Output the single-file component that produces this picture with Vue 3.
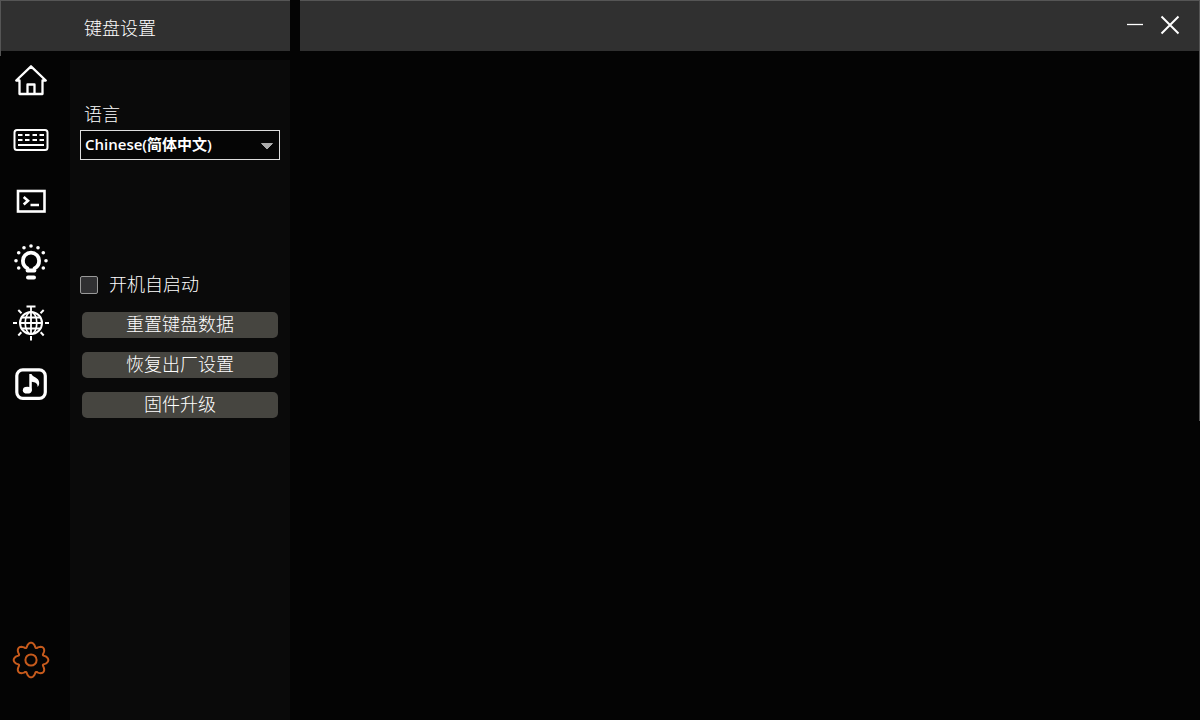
<script setup>
import { ref } from 'vue'

const language = ref('zh')
const autostart = ref(false)

const gearPoints = Array.from({ length: 160 }, (_, i) => {
  const t = (i / 160) * Math.PI * 2
  const r = 15.1 + 2.2 * Math.cos(8 * t)
  const a = t + 0.04 * Math.sin(8 * t)
  return `${(20 + r * Math.cos(a)).toFixed(2)},${(20 + r * Math.sin(a)).toFixed(2)}`
}).join(' ')

const bulbDots = [[20, 3], [13, 4.7], [27, 4.7], [7.7, 9.7], [32.3, 9.7], [5, 17.7], [35, 17.7], [7.7, 25], [32.3, 25]]
</script>

<template>
  <div class="app">
    <header class="titlebar">
      <h1 class="title">键盘设置</h1>
      <div class="window-bar">
        <button class="win-btn" type="button" aria-label="Minimize">
          <svg viewBox="0 0 20 20"><path d="M2 9.5H18" stroke-width="1.3" /></svg>
        </button>
        <button class="win-btn" type="button" aria-label="Close">
          <svg viewBox="0 0 20 20"><path d="M1.5 1.5L18.5 18.5M18.5 1.5L1.5 18.5" stroke-width="2" /></svg>
        </button>
      </div>
    </header>

    <div class="body">
      <nav class="rail">
        <button type="button" aria-label="Home">
          <svg viewBox="0 0 40 40">
            <path d="M8.5 20.5H5.2L20 6.3L34.8 20.5H31.5V34H8.5ZM16.5 34V24.5H23.5V34" stroke-width="2.3" stroke-linejoin="round" />
          </svg>
        </button>
        <button type="button" aria-label="Keyboard">
          <svg viewBox="0 0 40 40">
            <rect x="3.5" y="9" width="33" height="20" rx="2.5" stroke-width="2" />
            <path d="M7 14H11.5M14 14H18.5M21.5 14H26M28.5 14H33M7 19H11.5M14 19H18.5M21.5 19H26M28.5 19H33M7 24H33" stroke-width="1.9" />
          </svg>
        </button>
        <button type="button" aria-label="Macro">
          <svg viewBox="0 0 40 40">
            <rect x="7" y="9" width="26.5" height="20.5" stroke-width="2.6" />
            <path d="M12.7 15L17 18.7L12.7 22.5M19.5 23H28" stroke-width="2.6" />
          </svg>
        </button>
        <button type="button" aria-label="Lighting">
          <svg viewBox="0 0 40 40">
            <path d="M16.5 27.5V25.5C13.4 23.8 11.9 21 11.9 17.7A8.1 8.1 0 0 1 28.1 17.7C28.1 21 26.6 23.8 23.5 25.5V27.5Z" stroke-width="3.8" stroke-linejoin="round" />
            <path d="M17 34.5H23" stroke-width="4" stroke-linecap="round" />
            <circle v-for="(d, i) in bulbDots" :key="i" class="solid" :cx="d[0]" :cy="d[1]" r="1.8" />
          </svg>
        </button>
        <button type="button" aria-label="Light show">
          <svg viewBox="0 0 40 40">
            <circle cx="20" cy="19" r="11" stroke-width="2" />
            <ellipse cx="20" cy="19" rx="5.8" ry="11" stroke-width="1.7" />
            <path d="M20 2V30M15.5 2.5H24.5M10.5 13.5H29.5M9 19H31M10.5 24.5H29.5" stroke-width="1.8" />
            <path d="M2 19H6M34 19H38M20 32V36.5M7.3 6L10.5 9.3M32.7 6L29.5 9.3M7.3 31.5L10.3 28.3M32.7 31.5L29.7 28.3" stroke-width="2" />
          </svg>
        </button>
        <button type="button" aria-label="Music">
          <svg viewBox="0 0 40 40">
            <rect x="5.8" y="4.8" width="28.5" height="28.5" rx="6" stroke-width="3.2" />
            <ellipse class="solid" cx="16.3" cy="25.2" rx="4.5" ry="3.4" />
            <path class="solid" d="M18.3 9H20.5C21.2 12.3 28.2 12.2 28.2 18C28.2 20 27.4 21.2 26.6 22C26.8 18.2 23.8 17.2 20.8 16.8V25.5H18.3Z" />
          </svg>
        </button>
        <button class="active" type="button" aria-label="Settings">
          <svg viewBox="0 0 40 40">
            <polygon :points="gearPoints" stroke-width="2" stroke-linejoin="round" />
            <circle cx="20" cy="20" r="5.6" stroke-width="2" />
          </svg>
        </button>
      </nav>

      <aside class="panel">
        <label class="field-label" for="language">语言</label>
        <div class="select-box">
          <select id="language" v-model="language">
            <option value="zh">Chinese(简体中文)</option>
          </select>
          <svg class="arrow" viewBox="0 0 14 8"><path d="M1.5 1.5H12.5L7 7Z" /></svg>
        </div>

        <div class="check">
          <input id="autostart" v-model="autostart" type="checkbox" />
          <label for="autostart">开机自启动</label>
        </div>

        <div class="actions">
          <button type="button">重置键盘数据</button>
          <button type="button">恢复出厂设置</button>
          <button type="button">固件升级</button>
        </div>
      </aside>

      <main class="content"></main>
    </div>
  </div>
</template>

<style>
body {
  margin: 0;
  background: #040404;
}
</style>

<style scoped>
.app {
  position: relative;
  display: flex;
  flex-direction: column;
  min-height: 100vh;
  background: #040404;
  color: #fff;
  font-family: "Noto Sans CJK SC", sans-serif;
  font-size: 18px;
  font-weight: 300;
}

.app::before,
.app::after {
  content: "";
  position: absolute;
  top: 0;
  width: 1px;
  background: #555;
}

.app::before {
  left: 0;
  height: 56px;
}

.app::after {
  right: 0;
  height: 421px;
}

.titlebar {
  display: flex;
  gap: 10px;
  height: 51px;
}

.title,
.window-bar {
  box-sizing: border-box;
  margin: 0;
  border-top: 1px solid #555;
  background: #303030;
}

.title {
  width: 290px;
  padding: 4px 0 0 84px;
  font-size: 18px;
  font-weight: 300;
  line-height: 44px;
}

.window-bar {
  display: flex;
  flex: 1;
  align-items: center;
  justify-content: flex-end;
  gap: 15px;
  padding: 0 20px 2px 0;
}

button {
  padding: 0;
  border: 0;
  background: none;
  color: inherit;
  font: inherit;
  cursor: pointer;
}

svg {
  display: block;
  fill: none;
  stroke: currentColor;
}

.solid {
  fill: currentColor;
  stroke: none;
}

.win-btn,
.win-btn svg {
  width: 20px;
  height: 20px;
  color: #fff;
}

.body {
  display: flex;
  flex: 1;
}

.rail {
  display: flex;
  flex-direction: column;
  gap: 5px;
  box-sizing: border-box;
  width: 70px;
  padding: 1px 0 32px 11px;
}

.rail button {
  display: flex;
  align-items: center;
  height: 56px;
  color: #fff;
}

.rail svg {
  width: 40px;
  height: 40px;
}

.rail .active {
  margin-top: auto;
  color: #c65a1c;
}

.panel {
  box-sizing: border-box;
  width: 220px;
  margin-top: 9px;
  padding: 40px 10px 0;
  background: #0a0a0a;
}

.field-label {
  display: block;
  padding-left: 4px;
  line-height: 26px;
}

.select-box {
  position: relative;
  margin-top: 4px;
}

select {
  display: block;
  box-sizing: border-box;
  width: 100%;
  height: 30px;
  padding: 0 24px 2px 4px;
  border: 1px solid #ddd;
  border-radius: 0;
  background: #050505;
  color: #fff;
  appearance: none;
  font-family: "Open Sans", "Noto Sans CJK SC", sans-serif;
  font-size: 15px;
  font-weight: 600;
}

.arrow {
  position: absolute;
  top: 12px;
  right: 6px;
  width: 14px;
  height: 8px;
  fill: #aaa;
  stroke: #aaa;
  stroke-width: 1;
  stroke-linejoin: round;
  pointer-events: none;
}

.check {
  display: flex;
  align-items: center;
  gap: 11px;
  margin-top: 110px;
}

.check label {
  padding-bottom: 4px;
  line-height: 26px;
}

.check input {
  width: 18px;
  height: 18px;
  margin: 0;
  border: 1px solid #999;
  border-radius: 2px;
  background: #303032;
  appearance: none;
}

.check input:checked {
  background: #c65a1c;
}

.actions {
  display: flex;
  flex-direction: column;
  gap: 14px;
  margin-top: 12px;
  padding: 0 2px;
}

.actions button {
  height: 26px;
  padding-bottom: 4px;
  border-radius: 5px;
  background: #464540;
  line-height: 22px;
}

.content {
  flex: 1;
}
</style>
